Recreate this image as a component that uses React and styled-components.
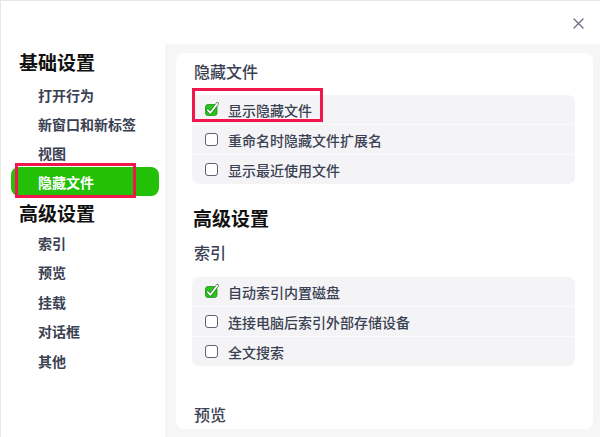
import React from 'react';
import styled, { createGlobalStyle } from 'styled-components';

const GlobalStyle = createGlobalStyle`
  html, body {
    margin: 0;
    padding: 0;
    background: #ffffff;
  }
  body {
    font-family: "Noto Sans CJK SC", "Noto Sans", sans-serif;
    -webkit-font-smoothing: antialiased;
  }
`;

const Window = styled.div`
  width: 600px;
  height: 437px;
  box-sizing: border-box;
  background: #ffffff;
  border-left: 1px solid #e6e6e6;
  border-top: 1px solid #e6e6e6;
  display: flex;
  flex-direction: column;
  overflow: hidden;
`;

const TitleBar = styled.div`
  height: 43px;
  display: flex;
  justify-content: flex-end;
  align-items: flex-start;
  padding: 16px 16px 0 0;
  box-sizing: border-box;
  flex-shrink: 0;
`;

const CloseButton = styled.button`
  width: 12px;
  height: 12px;
  padding: 0;
  border: none;
  background: transparent;
  display: flex;
  align-items: center;
  justify-content: center;
  cursor: pointer;
`;

const Body = styled.div`
  flex: 1;
  display: flex;
  min-height: 0;
`;

const Sidebar = styled.nav`
  width: 164px;
  flex-shrink: 0;
  display: flex;
  flex-direction: column;
  padding-top: 5px;
`;

const SideHeading = styled.div`
  font-size: 19px;
  line-height: 26px;
  font-weight: 700;
  color: #111111;
  padding-left: 18px;
  margin-top: ${p => (p.$first ? '0' : '4px')};
  margin-bottom: ${p => (p.$first ? '5px' : '2px')};
`;

const SideItem = styled.div`
  position: relative;
  height: ${p => p.$h || 29}px;
  margin: 0 6px 0 10px;
  padding-left: 27px;
  display: flex;
  align-items: center;
  font-size: 14px;
  font-weight: 600;
  color: ${p => (p.$active ? '#ffffff' : '#3a4152')};
  background: ${p => (p.$active ? '#22c007' : 'transparent')};
  border-radius: 8px;
`;

const Highlight = styled.div`
  position: absolute;
  left: ${p => p.$left}px;
  top: ${p => p.$top}px;
  width: ${p => p.$w}px;
  height: ${p => p.$h}px;
  box-sizing: border-box;
  border: 3px solid #f2164d;
  pointer-events: none;
`;

const Pane = styled.div`
  flex: 1;
  background: #f6f6f6;
  padding: 9px 7px 8px 11px;
  display: flex;
  min-width: 0;
`;

const Card = styled.div`
  flex: 1;
  background: #ffffff;
  border-radius: 8px;
  padding: 7px 18px 0 16px;
  overflow: hidden;
`;

const SectionTitle = styled.div`
  font-size: 16px;
  line-height: 22px;
  font-weight: 500;
  color: #3a4152;
  margin-left: 2px;
  margin-top: ${p => p.$mt || 0}px;
`;

const BigTitle = styled.div`
  font-size: 19px;
  line-height: 26px;
  font-weight: 700;
  color: #111111;
  margin-left: 1px;
  margin-top: ${p => p.$mt || 0}px;
`;

const Group = styled.div`
  margin-top: ${p => p.$mt || 0}px;
  background: #f4f4f6;
  border-radius: 7px;
  display: flex;
  flex-direction: column;
`;

const Row = styled.div`
  position: relative;
  height: 29px;
  display: flex;
  align-items: center;
  gap: 10px;
  padding-left: 13px;
  font-size: 14px;
  font-weight: 500;
  color: #3a4152;
  & + & {
    border-top: 1px solid #fbfbfc;
  }
`;

const EmptyBox = styled.span`
  width: 13px;
  height: 13px;
  box-sizing: border-box;
  border: 1.5px solid #5c6275;
  border-radius: 3px;
  background: #ffffff;
  flex-shrink: 0;
`;

const CheckIcon = styled.svg`
  width: 13px;
  height: 13px;
  flex-shrink: 0;
  overflow: visible;
`;

const Checkbox = ({ checked }) =>
  checked ? (
    <CheckIcon viewBox="0 0 13 13">
      <rect x="0.5" y="1.5" width="11.5" height="11" rx="2.5" fill="#27c41a" stroke="#1f8f18" strokeWidth="0.8" />
      <path d="M2.8 7.2 L5.4 9.8 L12.4 0.6" fill="none" stroke="#1c6e16" strokeWidth="3" strokeLinecap="round" strokeLinejoin="round" />
      <path d="M2.8 7.2 L5.4 9.8 L12.4 0.6" fill="none" stroke="#ffffff" strokeWidth="1.8" strokeLinecap="round" strokeLinejoin="round" />
    </CheckIcon>
  ) : (
    <EmptyBox />
  );

const basicItems = ['打开行为', '新窗口和新标签', '视图', '隐藏文件'];
const advancedItems = ['索引', '预览', '挂载', '对话框', '其他'];

const hiddenOptions = [
  { label: '显示隐藏文件', checked: true, mark: true },
  { label: '重命名时隐藏文件扩展名', checked: false },
  { label: '显示最近使用文件', checked: false },
];

const indexOptions = [
  { label: '自动索引内置磁盘', checked: true },
  { label: '连接电脑后索引外部存储设备', checked: false },
  { label: '全文搜索', checked: false },
];

const OptionGroup = ({ items, mt }) => (
  <Group $mt={mt}>
    {items.map(item => (
      <Row key={item.label}>
        <Checkbox checked={item.checked} />
        <span>{item.label}</span>
        {item.mark && <Highlight $left={0} $top={-7} $w={131} $h={34} />}
      </Row>
    ))}
  </Group>
);

export default function App() {
  return (
    <>
      <GlobalStyle />
      <Window>
        <TitleBar>
          <CloseButton aria-label="关闭">
            <svg width="11" height="11" viewBox="0 0 11 11">
              <path d="M1 1 L10 10 M10 1 L1 10" stroke="#6b7182" strokeWidth="1.4" strokeLinecap="round" />
            </svg>
          </CloseButton>
        </TitleBar>
        <Body>
          <Sidebar>
            <SideHeading $first>基础设置</SideHeading>
            {basicItems.map(name => (
              <SideItem key={name} $active={name === '隐藏文件'}>
                {name}
                {name === '隐藏文件' && <Highlight $left={4} $top={-4} $w={121} $h={35} />}
              </SideItem>
            ))}
            <SideHeading>高级设置</SideHeading>
            {advancedItems.map(name => (
              <SideItem key={name} $h={29.5}>{name}</SideItem>
            ))}
          </Sidebar>
          <Pane>
            <Card>
              <SectionTitle>隐藏文件</SectionTitle>
              <OptionGroup items={hiddenOptions} mt={13} />
              <BigTitle $mt={21}>高级设置</BigTitle>
              <SectionTitle $mt={10}>索引</SectionTitle>
              <OptionGroup items={indexOptions} mt={14} />
              <SectionTitle $mt={37}>预览</SectionTitle>
            </Card>
          </Pane>
        </Body>
      </Window>
    </>
  );
}
